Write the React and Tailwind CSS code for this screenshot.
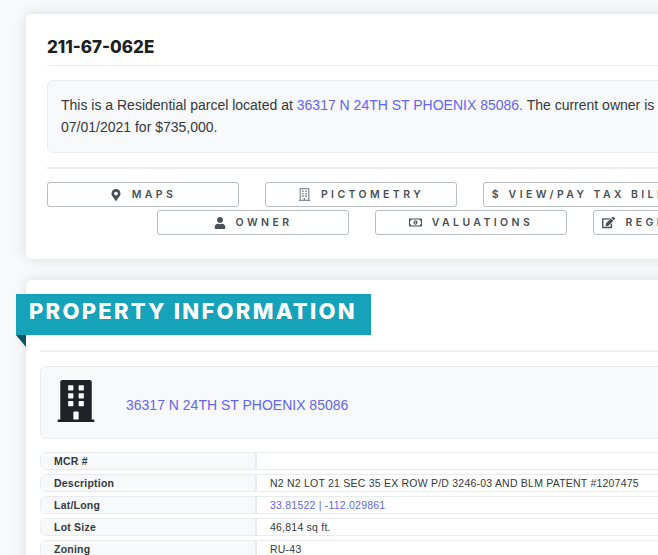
import React from 'react'
import { FaMapMarkerAlt, FaRegBuilding, FaUser, FaRegMoneyBillAlt, FaEdit, FaBuilding } from 'react-icons/fa'

const ActionButton = ({ icon, children }) => (
    <button className="w-[192px] h-[25px] shrink-0 flex items-center justify-center gap-[10px] bg-white border border-[#b9bec4] rounded-[3px] text-[#495057] text-[10.5px] font-semibold tracking-[3.4px] whitespace-nowrap font-['Inter',sans-serif]">
        {icon}
        <span>{children}</span>
    </button>
)

const rows = [
    { label: 'MCR #', value: '' },
    { label: 'Description', value: 'N2 N2 LOT 21 SEC 35 EX ROW P/D 3246-03 AND BLM PATENT #1207475' },
    { label: 'Lat/Long', value: '33.81522 | -112.029861', link: true },
    { label: 'Lot Size', value: '46,814 sq ft.' },
    { label: 'Zoning', value: 'RU-43' },
]

const App = () => {
    return (
        <div className="w-[658px] h-[555px] overflow-hidden bg-[#f8f9fb] pl-[26px] pt-[14px] font-['Liberation_Sans',sans-serif] text-[#343a40]">
            {/* Parcel summary card */}
            <div className="w-[888px] h-[245px] bg-white rounded-md shadow-[0_0_14px_rgba(0,0,0,0.12)] px-[21px] pt-[21px]">
                <h1 className="text-[17px] leading-[24px] font-extrabold text-[#1c1f23] font-['Inter',sans-serif]">211-67-062E</h1>
                <div className="mt-[6px] border-t border-[#e9ecef]" />
                <div className="mt-[14px] h-[73px] bg-[#f8f9fa] border border-[#e9ecef] rounded-md pl-[13px] pt-[13px] text-[14px] leading-[22px] whitespace-nowrap">
                    This is a Residential parcel located at <a className="text-[#6366f1]">36317 N 24TH ST PHOENIX 85086.</a> The current owner is<br />
                    07/01/2021 for $735,000.
                </div>
                <div className="mt-[14px] border-t-2 border-[#eef0f2]" />
                <div className="mt-[13px] flex gap-[26px]">
                    <ActionButton icon={<FaMapMarkerAlt size={12} />}>MAPS</ActionButton>
                    <ActionButton icon={<FaRegBuilding size={13} className="text-[#868e96]" />}>PICTOMETRY</ActionButton>
                    <ActionButton icon={<span className="tracking-normal">$</span>}>VIEW/PAY TAX BILL</ActionButton>
                </div>
                <div className="mt-[3px] ml-[110px] flex gap-[26px]">
                    <ActionButton icon={<FaUser size={12} />}>OWNER</ActionButton>
                    <ActionButton icon={<FaRegMoneyBillAlt size={13} />}>VALUATIONS</ActionButton>
                    <ActionButton icon={<FaEdit size={13} />}>REGISTERED NAME</ActionButton>
                </div>
            </div>

            {/* Property information card */}
            <div className="relative mt-[21px] w-[888px] bg-white rounded-md shadow-[0_0_14px_rgba(0,0,0,0.12)] px-[14px] pt-[70px] pb-8">
                <div className="absolute -left-[10px] top-[14px] w-[355px] h-[41px] bg-[#16a2b8] pl-[13px] pt-[2px] text-white text-[22px] leading-[30px] font-extrabold tracking-[2.25px] whitespace-nowrap font-['Inter',sans-serif]">
                    PROPERTY INFORMATION
                </div>
                <div className="absolute -left-[10px] top-[55px] w-0 h-0 border-t-[12px] border-l-[10px] border-t-[#0b5566] border-l-transparent" />

                <div className="border-t-2 border-[#eef0f2]" />

                <div className="mt-[14px] h-[73px] bg-[#f8f9fa] border border-[#e9ecef] rounded-md flex items-center pl-[17px]">
                    <FaBuilding size={42} className="text-[#1f2328] shrink-0 -ml-[3px] mb-[4px]" />
                    <a className="ml-[29px] mt-[6px] text-[14px] text-[#6366f1]">36317 N 24TH ST PHOENIX 85086</a>
                </div>

                <div className="mt-[13px] flex flex-col gap-[4px]">
                    {rows.map(row => (
                        <div key={row.label} className="h-[18px] flex border border-[#e9ecef] rounded-md text-[10.5px] tracking-[0.22px] leading-[16px] overflow-hidden">
                            <div className="w-[216px] shrink-0 bg-[#f8f9fa] border-r-2 border-[#e9ecef] pl-[13px] font-bold text-[#343a40]">{row.label}</div>
                            <div className={row.link ? 'pl-[13px] text-[#6366f1]' : 'pl-[13px]'}>{row.value}</div>
                        </div>
                    ))}
                </div>
            </div>
        </div>
    )
}

export default App
